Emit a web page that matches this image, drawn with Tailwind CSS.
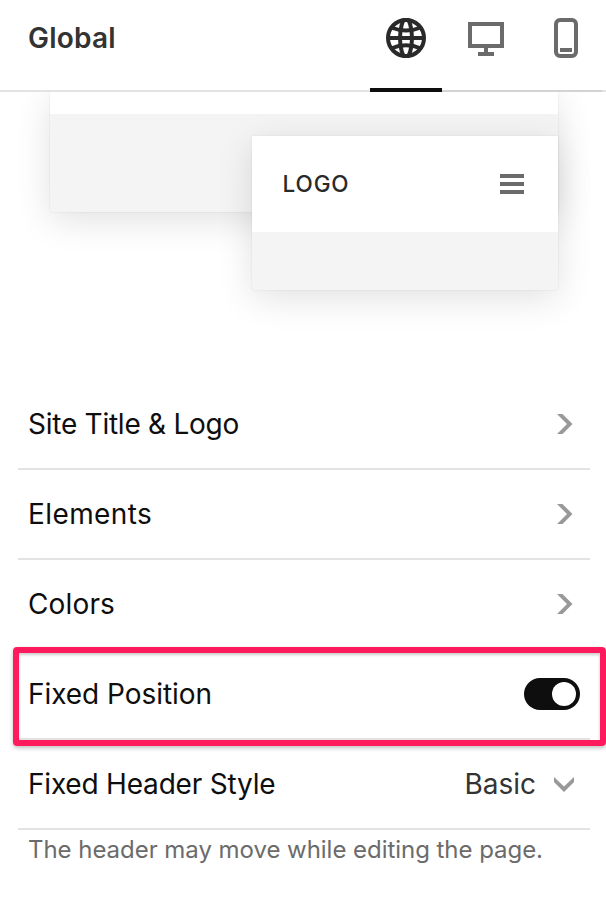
<!DOCTYPE html>
<html lang="en">
<head>
<meta charset="utf-8">
<title>Global</title>
<script src="https://cdn.jsdelivr.net/npm/@tailwindcss/browser@4"></script>
</head>
<body class="h-[903px] w-[606px] overflow-hidden bg-white font-['Inter','Liberation_Sans',sans-serif] text-[#0e0e0e]">
<header class="flex h-[92px] justify-between">
  <div class="flex-1 border-b-2 border-[#e3e3e3] pt-[18px] pl-7"><h1 class="text-[28px] leading-10 font-semibold tracking-[0.2px] text-[#333]">Global</h1></div>
  <nav class="flex gap-2 border-b-2 border-[#d3d3d3]">
    <button class="-mb-0.5 flex h-[92px] w-[72px] justify-center border-b-4 border-[#0e0e0e] pt-[18px]" aria-label="Global">
      <svg class="size-10" viewBox="0 0 40 40" fill="none" stroke="#2a2a2a" stroke-width="4"><circle cx="20" cy="20" r="18"/><ellipse cx="20" cy="20" rx="6" ry="19"/><path d="M2 20h36M5 9.500Q20 15.500 35 9.500M5 30.500Q20 24 35 30.500" stroke-width="3.800"/></svg>
    </button>
    <button class="flex w-[72px] justify-center pt-[22px]" aria-label="Desktop">
      <svg class="h-[34px] w-9" viewBox="0 0 36 34" fill="#6b6b6b"><path fill-rule="evenodd" d="M0 0h36v26H20v4h6v4H10v-4h6v-4H0ZM4 4v18h28V4Z"/></svg>
    </button>
    <button class="flex w-[72px] justify-center pt-[18px]" aria-label="Mobile">
      <svg class="h-10 w-6" viewBox="0 0 24 40" fill="none" stroke="#6b6b6b" stroke-width="4"><rect x="2" y="2" width="20" height="36" rx="4"/><path d="M6 32h12"/></svg>
    </button>
  </nav>
  <div class="w-1 border-b-2 border-[#e3e3e3]"></div>
</header>

<section class="relative h-[288px] overflow-hidden">
  <div class="ml-[50px] h-[120px] w-[508px] rounded-b-xs bg-[#f4f4f4] shadow-[0_0_2px_rgba(0,0,0,0.1),0_8px_36px_rgba(0,0,0,0.12)]"><div class="h-[22px] bg-white"></div></div>
  <div class="absolute top-[44px] left-[252px] h-[154px] w-[306px] rounded-xs bg-[#f4f4f4] shadow-[0_0_2px_rgba(0,0,0,0.1),0_8px_36px_rgba(0,0,0,0.12)]">
    <div class="flex h-24 items-center justify-between bg-white pr-[34px] pl-[30.500px]">
      <span class="text-[22.500px] font-medium tracking-[0.900px] text-[#2a2a2a]">LOGO</span>
      <span class="flex w-6 flex-col gap-1"><i class="h-1 bg-[#6b6b6b]"></i><i class="h-1 bg-[#6b6b6b]"></i><i class="h-1 bg-[#6b6b6b]"></i></span>
    </div>
  </div>
</section>

<main class="relative pr-4 pl-[18px] text-[28px] leading-10">
  <div class="flex h-[90px] items-center justify-between border-b-2 border-[#e3e3e3] pr-[17px] pl-2.5"><span class="tracking-[-0.25px]">Site Title &amp; Logo</span><svg class="h-5 w-4" viewBox="0 0 16 20" fill="#999"><path d="M0 0h5.500L15.500 10 5.500 20H0L10 10Z"/></svg></div>
  <div class="flex h-[90px] items-center justify-between border-b-2 border-[#e3e3e3] pr-[17px] pl-2.5"><span class="tracking-[0.4px]">Elements</span><svg class="h-5 w-4" viewBox="0 0 16 20" fill="#999"><path d="M0 0h5.500L15.500 10 5.500 20H0L10 10Z"/></svg></div>
  <div class="flex h-[90px] items-center justify-between border-b-2 border-[#e3e3e3] pr-[17px] pl-2.5"><span class="tracking-[0.15px]">Colors</span><svg class="h-5 w-4" viewBox="0 0 16 20" fill="#999"><path d="M0 0h5.500L15.500 10 5.500 20H0L10 10Z"/></svg></div>
  <div class="flex h-[90px] items-center justify-between border-b-2 border-[#e3e3e3] pr-2.5 pl-2.5"><span class="tracking-[-0.05px]">Fixed Position</span><span class="flex h-8 w-14 items-center justify-end rounded-full bg-[#0e0e0e] pr-1"><i class="size-6 rounded-full bg-white"></i></span></div>
  <div class="flex h-[90px] items-center justify-between border-b-2 border-[#e3e3e3] pr-4 pl-2.5"><span class="tracking-[-0.2px]">Fixed Header Style</span><span class="flex items-center gap-[18px] text-[#333]"><span>Basic</span><svg class="h-[15px] w-5" viewBox="0 0 20 15" fill="#999"><path d="M0 0 10 9.500 20 0v5L10 15 0 5Z"/></svg></span></div>
  <p class="pl-2.5 text-[24px] tracking-[-0.04px] text-[#6b6b6b]">The header may move while editing the page.</p>
  <div class="absolute top-[267px] left-[13px] h-[99px] w-[593px] rounded-[4px] border-6 border-[#ff1a5e] shadow-[0_2px_4px_rgba(0,0,0,0.25),inset_0_2px_3px_rgba(0,0,0,0.2)]"></div>
</main>
</body>
</html>
